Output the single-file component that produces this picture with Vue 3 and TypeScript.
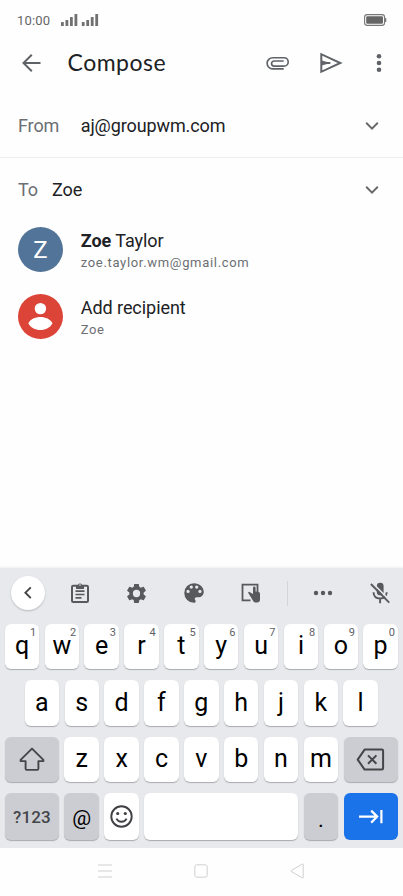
<script setup lang="ts">
interface Key {
  label: string
  hint?: string
}

interface Suggestion {
  strong: string
  rest: string
  detail: string
  kind: 'initial' | 'person'
}

const topRow: Key[] = 'qwertyuiop'.split('').map((label, i) => ({ label, hint: String((i + 1) % 10) }))
const homeRow: Key[] = 'asdfghjkl'.split('').map((label) => ({ label }))
const bottomRow: Key[] = 'zxcvbnm'.split('').map((label) => ({ label }))
const bars: number[] = [4, 6, 9, 12]

const suggestions: Suggestion[] = [
  { strong: 'Zoe', rest: ' Taylor', detail: 'zoe.taylor.wm@gmail.com', kind: 'initial' },
  { strong: '', rest: 'Add recipient', detail: 'Zoe', kind: 'person' },
]
</script>

<template>
  <main class="screen">
    <header class="status">
      <span class="clock">10:00</span>
      <svg class="signal" width="38" height="12" viewBox="0 0 38 12">
        <g v-for="s in 2" :key="s">
          <rect v-for="(h, i) in bars" :key="i" :x="(s - 1) * 20.8 + i * 4.5" :y="12 - h" width="2.8" :height="h" rx=".6" fill="#707070" />
        </g>
      </svg>
      <svg class="battery" width="23" height="12" viewBox="0 0 23 12">
        <rect x=".6" y=".6" width="20" height="10.8" rx="2.6" fill="none" stroke="#777" stroke-width="1.1" />
        <rect x="2.2" y="2.2" width="16.8" height="7.6" rx="1.2" fill="#666" />
        <rect x="21" y="4" width="1.3" height="4" rx=".6" fill="#777" />
      </svg>
    </header>

    <nav class="appbar">
      <svg class="back" width="26" height="26" viewBox="0 0 26 26" fill="none" stroke="#5f6368" stroke-width="2">
        <path d="M21.5 13H5M12.800 4.700 4.500 13l8.300 8.300" />
      </svg>
      <h1>Compose</h1>
      <svg class="clip" width="24" height="14" viewBox="0 0 24 14" fill="none" stroke="#5f6368" stroke-width="1.65">
        <path d="M17.700 12.900H6.700a5.600 5.600 0 0 1 0-11.200h11.300a4.200 4.200 0 0 1 0 8.400H8.100a2.500 2.500 0 0 1 0-5.100h9.600" />
      </svg>
      <svg class="send" width="24" height="22" viewBox="0 0 24 22">
        <path d="M2.3 2.2v17.6L21.3 11zM2.3 11h9" fill="none" stroke="#5f6368" stroke-width="2" />
        <path d="M2.5 8.4 12 11l-9.5 2.6z" fill="#5f6368" />
      </svg>
      <svg class="more" width="6" height="20" viewBox="0 0 6 20" fill="#5f6368">
        <circle cx="3" cy="3.2" r="2.3" /><circle cx="3" cy="10" r="2.3" /><circle cx="3" cy="16.7" r="2.3" />
      </svg>
    </nav>

    <section class="field from">
      <span class="name">From</span>
      <span class="value">aj@groupwm.com</span>
      <svg class="chevron" width="14" height="10" viewBox="0 0 14 10"><path d="m1.2 1.8 5.8 5.8 5.8-5.8" /></svg>
    </section>
    <section class="field to">
      <span class="name">To</span>
      <span class="value">Zoe</span>
      <svg class="chevron" width="14" height="10" viewBox="0 0 14 10"><path d="m1.2 1.8 5.8 5.8 5.8-5.8" /></svg>
    </section>

    <ul class="suggestions">
      <li v-for="item in suggestions" :key="item.detail">
        <span class="avatar" :class="item.kind">
          <template v-if="item.kind === 'initial'">Z</template>
          <svg v-else width="45" height="45" viewBox="0 0 45 45" fill="#fff">
            <circle cx="22.4" cy="14.6" r="5.7" />
            <path d="M10.3 29.2c2.2-4 6.8-6.2 12.1-6.2s9.9 2.2 12.1 6.2c-2.2 4.3-6.8 6.8-12.1 6.8s-9.9-2.5-12.1-6.8z" />
          </svg>
        </span>
        <div class="who">
          <div class="title"><b>{{ item.strong }}</b>{{ item.rest }}</div>
          <div class="detail">{{ item.detail }}</div>
        </div>
      </li>
    </ul>

    <section class="keyboard">
      <div class="tools">
        <span class="collapse">
          <svg width="12" height="14" viewBox="0 0 12 14" fill="none" stroke="#444" stroke-width="1.9"><path d="M8.8 1.3 3.4 6.700l5.4 5.400" /></svg>
        </span>
        <span class="tool">
          <svg width="20" height="22" viewBox="0 0 20 22">
            <rect x="2" y="3.7" width="16" height="16.3" rx="1.2" fill="none" stroke="#58595c" stroke-width="2" />
            <path d="M6 3h2a2.1 2.1 0 0 1 4 0h2v4H6z" fill="#58595c" />
            <circle cx="10" cy="3" r=".8" fill="#e8e9ed" />
            <path d="M5.5 9.2h9M5.5 12.5h9M5.5 15.9h6" stroke="#58595c" stroke-width="1.7" />
          </svg>
        </span>
        <span class="tool">
          <svg width="23" height="23" viewBox="0 0 24 24" fill="#58595c">
            <path d="M19.43 12.98c.04-.32.07-.64.07-.98s-.03-.66-.07-.98l2.11-1.65c.19-.15.24-.42.12-.64l-2-3.46c-.12-.22-.39-.3-.61-.22l-2.49 1c-.52-.4-1.08-.73-1.69-.98l-.38-2.65A.488.488 0 0 0 14 2h-4c-.25 0-.46.18-.49.42l-.38 2.65c-.61.25-1.17.59-1.69.98l-2.49-1c-.23-.09-.49 0-.61.22l-2 3.46c-.13.22-.07.49.12.64l2.11 1.65c-.04.32-.07.65-.07.98s.03.66.07.98l-2.11 1.65c-.19.15-.24.42-.12.64l2 3.46c.12.22.39.3.61.22l2.49-1c.52.4 1.08.73 1.69.98l.38 2.65c.03.24.24.42.49.42h4c.25 0 .46-.18.49-.42l.38-2.65c.61-.25 1.17-.59 1.69-.98l2.49 1c.23.09.49 0 .61-.22l2-3.46c.12-.22.07-.49-.12-.64zM12 15.8a3.8 3.8 0 1 1 0-7.6 3.8 3.8 0 0 1 0 7.6z" />
          </svg>
        </span>
        <span class="tool">
          <svg width="26" height="26" viewBox="0 0 24 24" fill="#58595c">
            <path d="M12 3a9 9 0 0 0 0 18c.83 0 1.5-.67 1.5-1.5 0-.39-.15-.74-.39-1.01-.23-.26-.38-.61-.38-.99 0-.83.67-1.5 1.5-1.5H16c2.76 0 5-2.24 5-5 0-4.42-4.03-8-9-8zm-5.5 9a1.5 1.5 0 1 1 0-3 1.5 1.5 0 0 1 0 3zm3-4a1.5 1.5 0 1 1 0-3 1.5 1.5 0 0 1 0 3zm5 0a1.5 1.5 0 1 1 0-3 1.5 1.5 0 0 1 0 3zm3 4a1.5 1.5 0 1 1 0-3 1.5 1.5 0 0 1 0 3z" />
          </svg>
        </span>
        <span class="tool">
          <svg width="20" height="20" viewBox="0 0 20 20">
            <path d="M16.5 9V1.700H1.500v15.600h8" fill="none" stroke="#58595c" stroke-width="1.800" />
            <path d="M7 9.500l1-.8 4 2.300V4.800q0-1.300 1.300-1.300t1.300 1.300v3.700l3 .6q1.400.3 1.400 1.600v5.500q0 3.200-3 3.200h-1.500q-1.200 0-2-1z" fill="#58595c" />
          </svg>
        </span>
        <span class="divider"></span>
        <span class="tool dots">
          <svg width="20" height="6" viewBox="0 0 20 6" fill="#58595c"><circle cx="3" cy="3" r="2.2" /><circle cx="10" cy="3" r="2.2" /><circle cx="17" cy="3" r="2.2" /></svg>
        </span>
        <span class="tool mic">
          <svg width="22" height="24" viewBox="0 0 22 24">
            <rect x="7.8" y="1.8" width="6.8" height="12.5" rx="3.4" fill="#58595c" />
            <path d="M4.5 11.3c.2 3.9 2.9 6.2 6.6 6.2s6.4-2.3 6.6-6.2M11.1 17.5v4.7" fill="none" stroke="#58595c" stroke-width="1.9" />
            <path d="m3.3 1.8 18 18.2" stroke="#e8e9ed" stroke-width="1.7" />
            <path d="m1.9 3 18.3 18.6" stroke="#58595c" stroke-width="1.9" />
          </svg>
        </span>
      </div>

      <div class="row">
        <span v-for="k in topRow" :key="k.label" class="key">{{ k.label }}<i class="hint">{{ k.hint }}</i></span>
      </div>
      <div class="row home">
        <span v-for="k in homeRow" :key="k.label" class="key">{{ k.label }}</span>
      </div>
      <div class="row">
        <span class="key grey wide icon">
          <svg width="28" height="26" viewBox="0 0 28 26" fill="none" stroke="#444549" stroke-width="1.9" stroke-linejoin="round">
            <path d="M14 2.6 2.6 13.900v1.200h5v7.600q0 1.200 1.200 1.200h10.400q1.200 0 1.200-1.200v-7.600h5v-1.200z" />
          </svg>
        </span>
        <span v-for="k in bottomRow" :key="k.label" class="key">{{ k.label }}</span>
        <span class="key grey wide icon">
          <svg width="30" height="24" viewBox="0 0 30 24" fill="none" stroke="#444549" stroke-width="2" stroke-linejoin="round">
            <path d="M8.600 2.600h17.200q1.300 0 1.300 1.300v17.400q0 1.300-1.300 1.300H8.600L1.700 12.600zM12 8.400l8.400 8.400M20.400 8.400 12 16.800" />
          </svg>
        </span>
      </div>
      <div class="row last">
        <span class="key grey wide mode">?123</span>
        <span class="key grey at">@</span>
        <span class="key icon">
          <svg width="24" height="24" viewBox="0 0 24 24" fill="none" stroke="#404145" stroke-width="1.9">
            <circle cx="11.500" cy="11.500" r="10.200" />
            <path d="M6.400 13.700c1 2 2.900 3.100 5.100 3.100s4.100-1.100 5.100-3.100" />
            <circle cx="7.700" cy="8.500" r="1.600" fill="#404145" stroke="none" /><circle cx="15.300" cy="8.500" r="1.600" fill="#404145" stroke="none" />
          </svg>
        </span>
        <span class="key space"></span>
        <span class="key grey period">.</span>
        <span class="key enter wide">
          <svg width="26" height="16" viewBox="0 0 26 16" fill="none" stroke="#fff" stroke-width="2.2"><path d="M1 7.6h18.2M13.2 1.6l6 6-6 6M23.4 1v13.2" /></svg>
        </span>
      </div>
    </section>

    <footer class="system">
      <svg width="14" height="14" viewBox="0 0 14 14" stroke="#d0d0d0"><path d="M0 1h14M0 7h14M0 13h14" /></svg>
      <svg width="14" height="14" viewBox="0 0 14 14" fill="none" stroke="#d0d0d0"><rect x=".8" y=".8" width="12.4" height="12.4" rx="2" /></svg>
      <svg width="14" height="16" viewBox="0 0 14 16" fill="none" stroke="#d0d0d0"><path d="M13.2 1.3v13.4q0 .7-.7.3L1.1 8.400q-.5-.4 0-.8L12.500 1q.7-.4.7.3z" /></svg>
    </footer>
  </main>
</template>

<style>
body {
  margin: 0;
  background: #fefefe;
}
</style>

<style scoped>
.screen {
  display: flex;
  flex-direction: column;
  width: 403px;
  height: 896px;
  overflow: hidden;
  background: #fefefe;
  color: #202124;
  font-family: Roboto, 'Liberation Sans', sans-serif;
}
svg {
  display: block;
  flex: none;
}
.status {
  display: flex;
  align-items: center;
  box-sizing: border-box;
  height: 40px;
  padding: 0 16px 0 17px;
  color: #666;
  font-size: 13px;
  letter-spacing: .2px;
}
.clock {
  width: 44px;
  padding-top: 1px;
}
.battery {
  margin-left: auto;
}
.appbar {
  display: flex;
  align-items: center;
  box-sizing: border-box;
  height: 46px;
  padding: 0 21.5px 0 18.5px;
}
.appbar h1 {
  width: 198px;
  margin: 0 0 2px 23px;
  font: 400 23px/28px Lato, sans-serif;
  letter-spacing: .5px;
}
.send {
  margin-left: 29.5px;
}
.more {
  margin-left: auto;
}
.field {
  display: flex;
  align-items: center;
  box-sizing: border-box;
  padding: 0 24.5px 0 18px;
  font-size: 18px;
  line-height: 24px;
  letter-spacing: -.1px;
}
.from {
  height: 72px;
  padding-top: 9px;
  border-bottom: 1px solid #eeeeef;
}
.to {
  height: 58px;
  padding-top: 5px;
}
.name {
  width: 62.7px;
  color: #6c6f73;
}
.to .name {
  width: 34px;
}
.chevron {
  margin-left: auto;
  fill: none;
  stroke: #6a6a6a;
  stroke-width: 2;
}
.suggestions {
  flex: 1;
  margin: 0;
  padding: 0;
  list-style: none;
}
.suggestions li {
  display: flex;
  align-items: center;
  height: 67px;
  padding-left: 18px;
}
.avatar {
  display: grid;
  place-items: center;
  width: 45px;
  height: 45px;
  border-radius: 50%;
  background: #527499;
  color: #fff;
  font-size: 24px;
}
.avatar.person {
  background: #db4437;
}
.who {
  margin: 3px 0 0 17.7px;
}
.title {
  font-size: 18px;
  line-height: 22px;
  letter-spacing: -.05px;
}
.title b {
  font-weight: 700;
}
.detail {
  padding-top: 1px;
  color: #6c6f73;
  font-size: 13px;
  line-height: 20px;
  letter-spacing: .68px;
}
.keyboard {
  box-sizing: border-box;
  height: 280px;
  padding: 0 5.2px 0 4.8px;
  background: #e8e9ed;
  box-shadow: 0 -1px 2px #eeeeef;
}
.tools {
  display: flex;
  align-items: center;
  height: 50px;
  margin-bottom: 6px;
}
.collapse,
.tool {
  display: grid;
  place-items: center;
}
.collapse {
  flex: none;
  width: 34px;
  height: 34px;
  margin: 0 6.2px;
  border-radius: 50%;
  background: #fff;
  box-shadow: 0 1px 2px #b8b9bd;
}
.tool {
  flex: 0 0 57.2px;
}
.divider {
  flex: none;
  width: 1px;
  height: 25px;
  margin-left: 6.8px;
  background: #d4d5d9;
}
.tool.dots {
  flex-basis: 71px;
}
.tool.mic {
  flex-basis: 43.5px;
}
.row {
  display: flex;
  gap: 5.4px;
  height: 45.3px;
  margin-bottom: 11.1px;
}
.home {
  padding: 0 19.9px;
}
.last {
  height: 47px;
  margin: 0;
}
.key {
  position: relative;
  display: flex;
  align-items: center;
  justify-content: center;
  box-sizing: border-box;
  flex: 1 1 0;
  padding-bottom: 2px;
  border-radius: 6px;
  background: #fff;
  box-shadow: 0 1px 1px #a9aaae;
  color: #000;
  font-size: 25px;
}
.wide {
  flex: 0 0 54.3px;
}
.icon {
  padding-bottom: 0;
}
.grey {
  background: #cccdd2;
}
.hint {
  position: absolute;
  top: 2px;
  right: 3px;
  color: #606165;
  font: normal 11px/13px Roboto, sans-serif;
}
.last .key {
  flex-basis: 34.44px;
  flex-grow: 0;
}
.last .wide {
  flex-basis: 54.3px;
}
.last .space {
  flex: 1;
}
.mode {
  padding-bottom: 0;
  color: #444549;
  font-size: 17px;
  font-weight: 500;
  letter-spacing: .1px;
}
.at {
  padding: 3px 0 0;
  font-size: 21px;
}
.period {
  padding: 6px 0 0;
  font-size: 22px;
}
.enter {
  padding-bottom: 0;
  background: #1a73e8;
  box-shadow: none;
}
.system {
  display: flex;
  align-items: center;
  justify-content: space-between;
  box-sizing: border-box;
  height: 48px;
  padding: 0 99px 2px 98px;
}
</style>
